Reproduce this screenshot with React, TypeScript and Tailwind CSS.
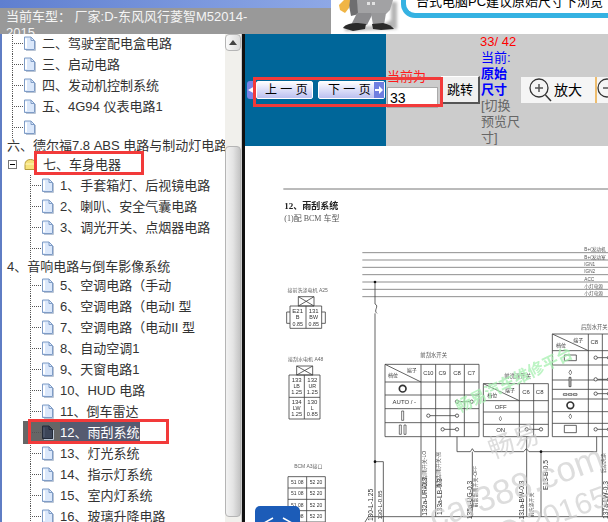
import type { ReactNode } from "react";

const FONT = "[font-family:'Liberation_Sans','Noto_Sans_CJK_SC',sans-serif]";

type TreeItem = {
  level: 1 | 2 | 0;
  label?: string;
  folder?: boolean;
  selected?: boolean;
};

const TREE: TreeItem[] = [
  { level: 1, label: "二、驾驶室配电盒电路" },
  { level: 1, label: "三、启动电路" },
  { level: 1, label: "四、发动机控制系统" },
  { level: 1, label: "五、4G94 仪表电路1" },
  { level: 1 },
  { level: 0, label: "六、德尔福7.8 ABS 电路与制动灯电路" },
  { level: 1, label: "七、车身电器", folder: true },
  { level: 2, label: "1、手套箱灯、后视镜电路" },
  { level: 2, label: "2、喇叭、安全气囊电路" },
  { level: 2, label: "3、调光开关、点烟器电路" },
  { level: 2 },
  { level: 0, label: "4、音响电路与倒车影像系统" },
  { level: 2, label: "5、空调电路（手动" },
  { level: 2, label: "6、空调电路（电动I 型" },
  { level: 2, label: "7、空调电路（电动II 型" },
  { level: 2, label: "8、自动空调1" },
  { level: 2, label: "9、天窗电路1" },
  { level: 2, label: "10、HUD 电路" },
  { level: 2, label: "11、倒车雷达" },
  { level: 2, label: "12、雨刮系统", selected: true },
  { level: 2, label: "13、灯光系统" },
  { level: 2, label: "14、指示灯系统" },
  { level: 2, label: "15、室内灯系统" },
  { level: 2, label: "16、玻璃升降电路" },
];

function Connector({ width }: { width: number }) {
  return (
    <svg width={width} height={21} className="shrink-0">
      <path
        d={`M0.5 0V21M0 10.5H${width}`}
        stroke="#555"
        strokeDasharray="1 1"
        fill="none"
      />
    </svg>
  );
}

function FileIcon({ dark }: { dark?: boolean }) {
  return (
    <svg width={13} height={15} viewBox="0 0 13 15" className="shrink-0">
      <path
        d="M1.5 1H8L11.5 4.5V13.5H1.5Z"
        fill={dark ? "#3c4558" : "#dbe8fb"}
        stroke={dark ? "#232a38" : "#7f9cc6"}
      />
      <path d="M3 2.5V12" stroke={dark ? "#4a5468" : "#fff"} strokeWidth={2} />
      <path d="M8 1V4.5H11.5" fill="none" stroke={dark ? "#232a38" : "#7f9cc6"} />
      <path d="M12.5 5V14.5H3" fill="none" stroke="#b9c4d4" />
    </svg>
  );
}

function FolderIcon() {
  return (
    <svg width={13} height={13} viewBox="0 0 13 13" className="shrink-0">
      <path
        d="M1 6.5C1 3 3.5 1.5 6.5 1.5S12 3 12 6.5V11.5H1Z"
        fill="#f6e27a"
        stroke="#b49a3a"
      />
      <path d="M1.5 6H11.5" stroke="#fff6c0" />
    </svg>
  );
}

function TreeRow({ item }: { item: TreeItem }) {
  if (item.level === 0) {
    return (
      <div className="flex h-4 items-center whitespace-nowrap pl-[5px] leading-4">
        {item.label}
      </div>
    );
  }
  if (item.folder) {
    return (
      <div className="flex h-[21px] items-center whitespace-nowrap">
        <span className="ml-[6px] flex h-[9px] w-[9px] shrink-0 items-center justify-center border border-[#777] bg-white">
          <span className="h-px w-[5px] bg-black" />
        </span>
        <span className="ml-[7px]">
          <FolderIcon />
        </span>
        <span className="ml-[6px]">{item.label}</span>
      </div>
    );
  }
  if (item.selected) {
    return (
      <div className="flex h-[21px] items-center whitespace-nowrap">
        <div className="ml-[21px] flex h-[23px] items-center bg-[#666] pl-[7px] text-white">
          <Connector width={11} />
          <FileIcon dark />
          <span className="ml-[6px] bg-[#555a70] pr-px leading-[23px]">{item.label}</span>
        </div>
      </div>
    );
  }
  return (
    <div className="flex h-[21px] items-center whitespace-nowrap">
      <span className={item.level === 1 ? "w-[10px] shrink-0" : "w-[28px] shrink-0"} />
      <Connector width={11} />
      <FileIcon />
      <span className="ml-[6px]">{item.label}</span>
    </div>
  );
}

function Scrollbar() {
  return (
    <div className="flex w-[16px] shrink-0 flex-col bg-[#f1f0ec]">
      <div className="flex h-[17px] items-center justify-center rounded-sm border border-[#b5b5b5] bg-gradient-to-r from-[#fafafa] to-[#dcdcdc]">
        <svg width={8} height={5} viewBox="0 0 8 5">
          <path d="M4 0L8 5H0Z" fill="#444" />
        </svg>
      </div>
      <div className="mt-[95px] h-[371px] rounded-sm border border-[#b5b5b5] bg-gradient-to-r from-[#f2f2f2] via-[#e4e4e4] to-[#c4c4c4]" />
    </div>
  );
}

function Mascot() {
  return (
    <svg width={70} height={34} viewBox="0 0 70 34" className="shrink-0">
      <defs>
        <filter id="mascotShadow" x="-20%" y="-20%" width="140%" height="140%">
          <feGaussianBlur stdDeviation="1.5" />
        </filter>
      </defs>
      <path d="M14 31L66 29L66 2L60 2L60 20L50 26L14 27Z" fill="#b5b5b5" filter="url(#mascotShadow)" />
      {/* arm and wrench */}
      <path d="M17 0H27L28 14L20 16Z" fill="#6e6e70" />
      <path d="M8 5L13 0H19L18 8L14 13L9 10Z" fill="#f0b545" />
      {/* body */}
      <path d="M26 0H62L59 10L55 14H27Z" fill="#a2a2a4" />
      <rect x={36} y={2} width={3} height={3} fill="#e2e2e2" />
      <rect x={41} y={2} width={3} height={3} fill="#e2e2e2" />
      {/* legs */}
      <path d="M26 13H42L36 25H20Z" fill="#8b8b8e" />
      <path d="M40 13H55L53 25H42Z" fill="#98989a" />
      {/* shoes */}
      <path d="M12 28C14 24 21 23 27 23L35 24L34 29L22 31Z" fill="#2a2a2a" />
      <path d="M41 24L52 23C57 24 61 26 63 29L50 30L42 29Z" fill="#2a2a2a" />
    </svg>
  );
}

function Header() {
  return (
    <header className="flex h-[34px] shrink-0 overflow-hidden">
      <div className="flex w-[331px] shrink-0 flex-col">
        <div className="h-2 shrink-0 bg-gradient-to-r from-[#5f7fd0] to-[#8ea8e6]" />
        <div className="h-[26px] overflow-hidden bg-[#999] pl-[6px] pt-px">
          <p className="w-[248px] text-[13px] leading-4 text-[#f4f4f4]">
            当前车型： 厂家:D-东风风行菱智M52014-2015
          </p>
        </div>
      </div>
      <div className="flex flex-1 bg-white">
        <Mascot />
        <div className="h-[32px] flex-1 -translate-y-[14px] rounded-bl-[14px] border-b-[5px] border-l-[5px] border-[#35b2e2] pl-[10px] pt-[8px] text-[13px] leading-4 whitespace-nowrap text-black">
          台式电脑PC建议原始尺寸下浏览
        </div>
      </div>
    </header>
  );
}

function PageButton({ label, next }: { label: string; next?: boolean }) {
  return (
    <div
      className={`flex h-[18px] items-center rounded-[2px] border border-white bg-gradient-to-b from-[#fdfdff] to-[#bcc0f0] text-[12px] leading-none text-black ${
        next ? "ml-[5px] w-[67px] pl-[9px]" : "w-[57px] pl-[8px]"
      }`}
    >
      <span className="whitespace-pre">{label}</span>
      {next && (
        <span className="ml-auto flex h-full w-[10px] items-center justify-center bg-[#6f7fe0]">
          <svg width={8} height={8} viewBox="0 0 8 8">
            <path d="M0 3H4V0L8 4L4 8V5H0Z" fill="#fff" />
          </svg>
        </span>
      )}
    </div>
  );
}

function ZoomIcon({ minus }: { minus?: boolean }) {
  return (
    <svg width={23} height={25} viewBox="0 0 23 25" className="shrink-0">
      <circle cx={10} cy={10} r={9} fill="none" stroke="#333" strokeWidth={1.3} />
      <path d={minus ? "M6 10H14" : "M6 10H14M10 6V14"} stroke="#555" strokeWidth={1.5} />
      {!minus && <path d="M16.5 17L22 23" stroke="#333" strokeWidth={1.5} />}
    </svg>
  );
}

function Toolbar() {
  return (
    <div className="flex h-[112px] shrink-0">
      <div className="flex w-[141px] shrink-0 items-start bg-[#006699] pt-[47px]">
        <div className="ml-[2px] flex h-[18px] w-[9px] items-center justify-center rounded-l-[3px] bg-[#7a82e6]">
          <svg width={7} height={8} viewBox="0 0 7 8">
            <path d="M7 0V8L0 4Z" fill="#fff" />
          </svg>
        </div>
        <PageButton label="上 一 页" />
        <PageButton label="下 一 页" next />
      </div>
      <div className="flex min-w-0 flex-1 items-start overflow-hidden bg-[#cccccc]">
        <div className="w-[55px] shrink-0 pl-px pt-[35px]">
          <div className="text-[13px] leading-4 text-[#ff1a1a]">当前为</div>
          <div className="mt-[2px] h-[21px] w-[51px] border border-[#aaa] bg-white pl-[2px] text-[14px] leading-[20px] text-black">
            33
          </div>
        </div>
        <div className="mt-[42px] flex h-[28px] w-[39px] shrink-0 items-center justify-center border-b-2 border-l border-r-2 border-t border-b-[#555] border-l-white border-r-[#555] border-t-white bg-[#f0f0f0] text-[13px] text-black">
          跳转
        </div>
        <div className="w-[41px] shrink-0 text-[13px] leading-4">
          <div className="whitespace-nowrap text-[#ff0000]">33/ 42</div>
          <div className="pl-px text-[#0000ff]">当前:</div>
          <div className="pl-px font-bold text-[#0000ff]">原始</div>
          <div className="pl-px font-bold text-[#0000ff]">尺寸</div>
          <div className="pl-px text-[#666]">[切换预览尺寸]</div>
        </div>
        <div className="mt-[43px] flex h-[26px] w-[74px] shrink-0 items-center bg-[#f5f5f5] pl-[8px] text-[14px] text-black">
          <ZoomIcon />
          <span className="ml-[2px]">放大</span>
        </div>
        <div className="mt-[43px] h-[26px] w-[2px] shrink-0 bg-[#eebd6e]" />
        <div className="mt-[43px] flex h-[26px] flex-1 items-center overflow-hidden bg-[#f5f5f5]">
          <ZoomIcon minus />
        </div>
      </div>
    </div>
  );
}

function T({
  x,
  y,
  size = 18,
  children,
  rotate,
  fill = "#333",
  anchor = "middle",
  weight,
  family,
  opacity,
}: {
  x: number;
  y: number;
  size?: number;
  children: ReactNode;
  rotate?: number;
  fill?: string;
  anchor?: "middle" | "start";
  weight?: number;
  family?: string;
  opacity?: number;
}) {
  return (
    <text
      x={x}
      y={y}
      fontSize={size}
      fill={fill}
      textAnchor={anchor}
      fontWeight={weight}
      fontFamily={family}
      opacity={opacity}
      transform={rotate ? `rotate(${rotate} ${x} ${y})` : undefined}
    >
      {children}
    </text>
  );
}

function Contact({ x1, x2, y }: { x1: number; x2: number; y: number }) {
  return (
    <g fill="#fff" stroke="#444" strokeWidth={2.5}>
      <path d={`M${x1} ${y}H${x2}`} />
      <circle cx={x1} cy={y} r={5} />
      <circle cx={x2} cy={y} r={5} />
    </g>
  );
}

const SERIF = "'Liberation Serif','Noto Sans CJK SC',serif";
const BUS_LINES = [218, 240, 262, 284, 306, 328, 350];
const BUS_LABELS = ["B+(发动机", "B+(发动室", "IGN1", "IGN2", "ACC", "小灯电源", "小灯电源"];

function WiringDiagram() {
  return (
    <svg
      width={364}
      height={342}
      viewBox="0 0 1092 1026"
      className="block shrink-0 blur-[0.35px]"
      fontFamily="'Liberation Sans','Noto Sans CJK SC',sans-serif"
    >
      <path d="M115 27H1092" stroke="#777" strokeWidth={3} />
      <T x={118} y={86} size={27} anchor="start" weight={700} fill="#222" family={SERIF}>
        12、雨刮系统
      </T>
      <T x={118} y={122} size={24} anchor="start" fill="#555" family={SERIF}>
        (1)配 BCM 车型
      </T>

      <g stroke="#777" strokeWidth={2.5}>
        {BUS_LINES.map((y) => (
          <path key={y} d={`M352 ${y}H1092`} />
        ))}
      </g>
      {BUS_LABELS.map((label, i) => (
        <T key={i} x={1018} y={BUS_LINES[i] - 4} size={14} anchor="start" fill="#555">
          {label}
        </T>
      ))}

      <g fill="none" stroke="#444" strokeWidth={2.5}>
        <path d="M390 306V372M390 400V1026M390 845H415V1026M360 1026L370 1010H1092" />
        <path d="M390 372C404 378 384 392 396 400" />
        <path d="M528 770V1010M572 770V1010M636 770V815H676L682 806L688 815H836L844 806L852 815H1055V770M682 815V1010M845 770V1010M888 815V1010M1072 770V1010" />
      </g>
      <circle cx={390} cy={306} r={4} fill="#111" />
      <circle cx={390} cy={845} r={4} fill="#111" />
      <circle cx={888} cy={815} r={4} fill="#111" />

      {/* connectors on the left */}
      <T x={188} y={335} size={15} fill="#666">接前洗涤电机 A25</T>
      <g fill="none" stroke="#444" strokeWidth={2.5}>
        <path d="M160 350H207V378H160ZM160 350L207 378M207 350L160 378" />
        <path d="M135 378H230V445H135ZM183 378V445M135 396H125V430H135M230 396H241V430H230" />
      </g>
      <T x={158} y={400} size={18}>E21</T>
      <T x={158} y={418} size={17}>B</T>
      <T x={158} y={437} size={16}>0.85</T>
      <T x={206} y={400} size={18}>131</T>
      <T x={206} y={418} size={16}>BW</T>
      <T x={206} y={437} size={16}>0.85</T>

      <T x={182} y={544} size={15} fill="#666">接刮水电机 A48</T>
      <g fill="none" stroke="#444" strokeWidth={2.5}>
        <path d="M155 558H203V585H155ZM155 558L203 585M203 558L155 585" />
        <path d="M132 585H225V717H132ZM178 585V717M132 652H225" />
      </g>
      {[
        ["133", "LB", "1.25", 155, 606],
        ["132", "UR", "1.25", 202, 606],
        ["134", "LW", "1.25", 155, 672],
        ["130", "L", "0.85", 202, 672],
      ].map(([a, b, c, x, y]) => (
        <g key={a as string}>
          <T x={x as number} y={y as number} size={18}>{a}</T>
          <T x={x as number} y={(y as number) + 18} size={16}>{b}</T>
          <T x={x as number} y={(y as number) + 37} size={17}>{c}</T>
        </g>
      ))}

      <T x={190} y={863} size={15} fill="#666">BCM A3接口</T>
      <g fill="none" stroke="#444" strokeWidth={2.5}>
        <path d="M129 890H241V1026H129ZM185 890V1026M129 924H241M129 958H241M129 992H241" />
      </g>
      {[912, 946, 980, 1014].map((y) => (
        <g key={y}>
          <T x={157} y={y} size={15}>51 08</T>
          <T x={213} y={y} size={15}>52 20</T>
        </g>
      ))}

      {/* front washer switch */}
      <T x={566} y={532} size={16} fill="#555">前刮水开关</T>
      <g fill="none" stroke="#444" strokeWidth={2.5}>
        <path d="M420 553H702V770H420ZM528 553V770M572 553V770M615 553V770M658 553V770M420 606H702M420 645H702M420 686H702M420 728H702M420 553L528 606" />
      </g>
      <T x={500} y={577} size={15}>端子</T>
      <T x={444} y={592} size={15}>档位</T>
      <T x={550} y={585} size={17}>C10</T>
      <T x={592} y={585} size={18}>C9</T>
      <T x={636} y={585} size={18}>C8</T>
      <T x={679} y={585} size={18}>C7</T>
      <circle cx={473} cy={626} r={10} fill="none" stroke="#333" strokeWidth={5} />
      <T x={478} y={671} size={18}>AUTO / -</T>
      <path d="M470 693h6v28h-6zM463 735h6v28h-6zM477 735h6v28h-6z" fill="#fff" stroke="#333" strokeWidth={2} />
      <Contact x1={636} x2={680} y={665} />
      <Contact x1={550} x2={636} y={707} />
      <Contact x1={593} x2={636} y={748} />

      {/* rear washer switch */}
      <T x={818} y={594} size={16} fill="#555">前洗涤开关</T>
      <g fill="none" stroke="#444" strokeWidth={2.5}>
        <path d="M715 611H910V770H715ZM823 611V770M866 611V770M715 662H910M715 696H910M715 733H910M715 611L823 662" />
      </g>
      <T x={795} y={635} size={15}>端子</T>
      <T x={742} y={650} size={15}>档位</T>
      <T x={843} y={641} size={18}>C6</T>
      <T x={884} y={641} size={18}>C8</T>
      <T x={767} y={687} size={18}>OFF</T>
      <T x={766} y={722} size={20}>◊</T>
      <T x={767} y={757} size={18}>ON</T>
      <Contact x1={845} x2={888} y={748} />

      <T x={1048} y={447} size={16} fill="#555">后刮水开关</T>
      <g fill="none" stroke="#444" strokeWidth={2.5}>
        <path d="M922 462H1092M922 462V770H1092M1030 462V770M1072 462V770M922 512H1092M922 555H1092M922 600H1092M922 628H1092M922 657H1092M922 695H1092M922 730H1092M922 462L1030 512" />
        <path d="M958 525H994V542H958ZM958 736H994V758H958Z" />
      </g>
      <T x={1000} y={487} size={15}>端子</T>
      <T x={948} y={500} size={15}>档位</T>
      <T x={1048} y={492} size={18}>C8</T>
      <T x={976} y={584} size={22}>◊</T>
      <path d="M972 592h6v28h-6z" fill="#bbb" stroke="#333" strokeWidth={2} />
      <path d="M955 641h11v5h-11zM970 641h11v5h-11zM985 641h11v5h-11z" fill="#fff" stroke="#333" strokeWidth={2} />
      <circle cx={976} cy={676} r={10} fill="none" stroke="#333" strokeWidth={5} />
      <T x={976} y={717} size={22}>◊</T>
      <Contact x1={1052} x2={1092} y={533} />
      <Contact x1={1052} x2={1092} y={598} />
      <Contact x1={1052} x2={1092} y={641} />
      <Contact x1={1052} x2={1092} y={748} />

      <T x={542} y={870} size={15} rotate={-90} fill="#555">前刮刮雨开关-LO</T>
      <T x={586} y={870} size={15} rotate={-90} fill="#555">雨刮刮雨开关-高</T>
      <T x={696} y={920} size={15} rotate={-90} fill="#555">前刮刮雨开关-OFF</T>
      <T x={864} y={975} size={15} rotate={-90} fill="#555">前洗涤开关</T>
      <T x={1080} y={850} size={15} rotate={-90} fill="#555">后刮洗涤</T>
      <T x={385} y={975} size={20} rotate={-90}>130-L-1.25</T>
      <T x={412} y={975} size={18} rotate={-90}>130-L-0.85</T>
      <T x={545} y={950} size={20} rotate={-90}>132a-UR-0.3</T>
      <T x={592} y={950} size={20} rotate={-90}>133a-LB-0.3</T>
      <T x={680} y={960} size={20} rotate={-90}>135a-UG-0.3</T>
      <T x={838} y={960} size={20} rotate={-90}>131a-BW-0.3</T>
      <T x={910} y={885} size={20} rotate={-90}>E13-B-0.5</T>
      <T x={1088} y={960} size={20} rotate={-90}>137a-LW-0.3</T>

      {/* watermarks */}
      <T x={815} y={615} size={48} rotate={-26} fill="#a6f0b0" weight={700} opacity={0.75}>畅易汽车维修平台</T>
      <T x={815} y={810} size={78} rotate={-20} fill="#cfcfcf" opacity={0.7}>畅易</T>
      <T x={825} y={955} size={105} rotate={-20} fill="#cfcfcf" opacity={0.7}>car388.com</T>
      <T x={900} y={1045} size={90} rotate={-20} fill="#cfcfcf" opacity={0.7}>QQ:20165</T>
    </svg>
  );
}

export default function App() {
  return (
    <div className={`relative flex h-[522px] w-[608px] flex-col overflow-hidden bg-white ${FONT}`}>
      <Header />
      <div className="flex min-h-0 flex-1">
        <aside className="flex w-[241px] shrink-0 border-l-2 border-[#5f7dc4]">
          <div className="min-w-0 flex-1 overflow-hidden text-[13px] text-[#333]">
            <div className="-mt-px">
              {TREE.map((item, i) => (
                <TreeRow key={i} item={item} />
              ))}
            </div>
          </div>
          <Scrollbar />
        </aside>
        <div className="w-px shrink-0 bg-[#ccc]" />
        <div className="w-[3px] shrink-0 bg-[#111]" />
        <main className="flex min-w-0 flex-1 flex-col">
          <Toolbar />
          <div className="h-[34px] shrink-0" />
          <WiringDiagram />
        </main>
      </div>

      {/* red annotation boxes drawn over the page */}
      <div className="absolute left-[34px] top-[151px] h-[24px] w-[110px] border-[3px] border-[#f23a3a]" />
      <div className="absolute left-[28px] top-[419px] h-[25px] w-[141px] border-[3px] border-[#f23a3a]" />
      <div className="absolute left-[253px] top-[77px] h-[30px] w-[190px] border-[3px] border-[#f23a3a]" />

      <div className="absolute bottom-0 left-[255px] flex h-[16px] w-[45px] items-start justify-center rounded-t-[5px] bg-[#1c5cb8] pt-[11px]">
        <svg width={32} height={8} viewBox="0 0 32 8" className="shrink-0">
          <path d="M11 1L2 6M21 1L30 6" stroke="#fff" strokeWidth={1.5} fill="none" />
        </svg>
      </div>
    </div>
  );
}
